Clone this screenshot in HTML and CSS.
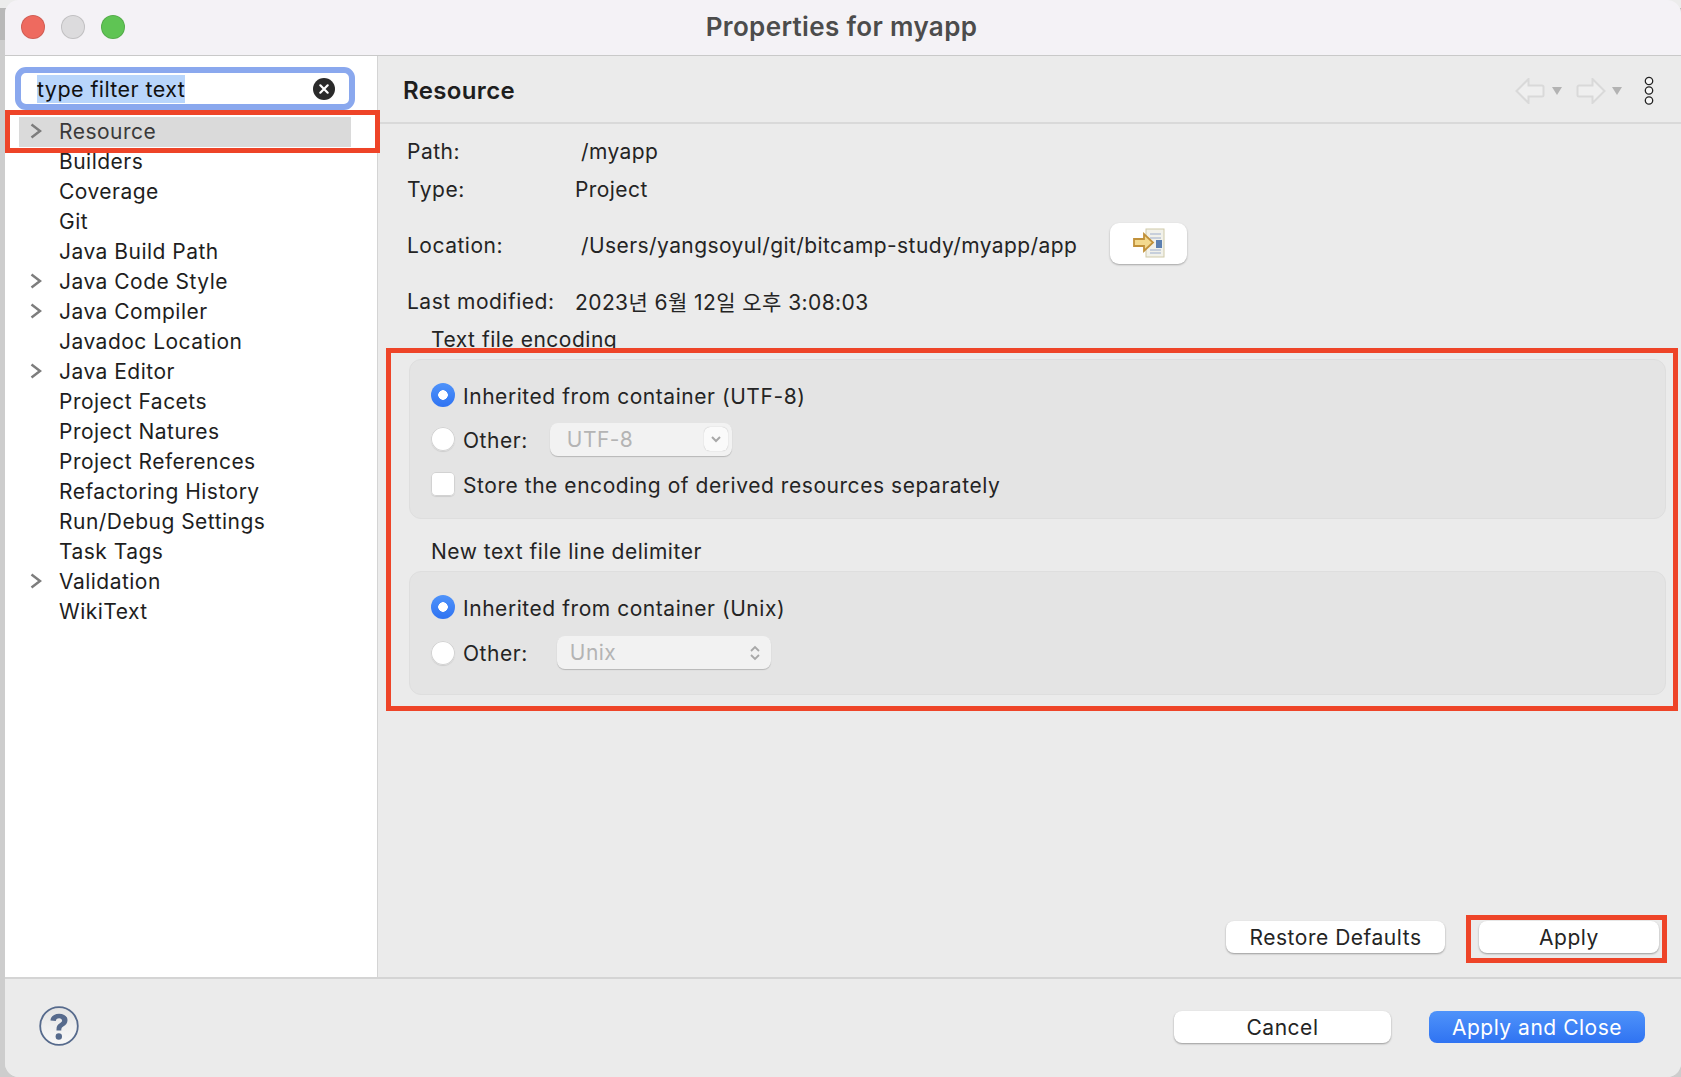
FILE: index.html
```html
<!DOCTYPE html>
<html lang="en">
<head>
<meta charset="utf-8">
<title>Properties for myapp</title>
<link rel="stylesheet" href="styles.css">
</head>
<body>
<div class="window">
  <header class="titlebar">
    <div class="lights"><span class="light red"></span><span class="light gray"></span><span class="light green"></span></div>
    <div class="title">Properties for myapp</div>
  </header>
  <div class="main">
    <aside class="sidebar">
      <div class="search"><span class="search-text">type filter text</span>
        <svg class="clear" width="22" height="22" viewBox="0 0 22 22"><circle cx="11" cy="11" r="11" fill="#2a2a2a"/><path d="M7.3 7.3l7.4 7.4M14.700 7.300l-7.400 7.400" stroke="#fff" stroke-width="2.200" stroke-linecap="round"/></svg>
      </div>
      <ul class="tree">
        <li class="node selected"><svg class="chev" width="12" height="16" viewBox="0 0 12 16"><path d="M1.500 1.500l8.500 6.500-8.500 6.500" fill="none" stroke="#7d7d7d" stroke-width="2.500"/></svg>Resource</li>
        <li class="node">Builders</li>
        <li class="node">Coverage</li>
        <li class="node">Git</li>
        <li class="node">Java Build Path</li>
        <li class="node"><svg class="chev" width="12" height="16" viewBox="0 0 12 16"><path d="M1.500 1.500l8.500 6.500-8.500 6.500" fill="none" stroke="#7d7d7d" stroke-width="2.500"/></svg>Java Code Style</li>
        <li class="node"><svg class="chev" width="12" height="16" viewBox="0 0 12 16"><path d="M1.500 1.500l8.500 6.500-8.500 6.500" fill="none" stroke="#7d7d7d" stroke-width="2.500"/></svg>Java Compiler</li>
        <li class="node">Javadoc Location</li>
        <li class="node"><svg class="chev" width="12" height="16" viewBox="0 0 12 16"><path d="M1.500 1.500l8.500 6.500-8.500 6.500" fill="none" stroke="#7d7d7d" stroke-width="2.500"/></svg>Java Editor</li>
        <li class="node">Project Facets</li>
        <li class="node">Project Natures</li>
        <li class="node">Project References</li>
        <li class="node">Refactoring History</li>
        <li class="node">Run/Debug Settings</li>
        <li class="node">Task Tags</li>
        <li class="node"><svg class="chev" width="12" height="16" viewBox="0 0 12 16"><path d="M1.500 1.500l8.500 6.500-8.500 6.500" fill="none" stroke="#7d7d7d" stroke-width="2.500"/></svg>Validation</li>
        <li class="node">WikiText</li>
      </ul>
    </aside>
    <section class="pane">
      <div class="pane-head">
        <h1 class="pane-title">Resource</h1>
        <div class="pane-tools">
          <svg width="30" height="26" viewBox="0 0 30 26"><path d="M13.500 1L1.500 13l12 12v-6.500h13.500a1.500 1.500 0 0 0 1.500-1.500V9a1.500 1.500 0 0 0-1.500-1.500H13.500z" fill="#efefef" stroke="#d9d9d9" stroke-width="2"/></svg>
          <svg class="drop" width="10" height="8" viewBox="0 0 10 8"><path d="M0 0h10L5 8z" fill="#b3b3b3"/></svg>
          <svg class="fwd" width="30" height="26" viewBox="0 0 30 26"><path d="M16.500 1l12 12-12 12v-6.500H3A1.500 1.500 0 0 1 1.500 17V9A1.500 1.500 0 0 1 3 7.500h13.500z" fill="#efefef" stroke="#d9d9d9" stroke-width="2"/></svg>
          <svg class="drop" width="10" height="8" viewBox="0 0 10 8"><path d="M0 0h10L5 8z" fill="#b3b3b3"/></svg>
          <svg class="more" width="10" height="29" viewBox="0 0 10 29"><circle cx="5" cy="5" r="3.700" fill="#f7f7f7" stroke="#222" stroke-width="1.300"/><circle cx="5" cy="14.500" r="3.700" fill="#f7f7f7" stroke="#222" stroke-width="1.300"/><circle cx="5" cy="24.500" r="3.700" fill="#f7f7f7" stroke="#222" stroke-width="1.300"/></svg>
        </div>
      </div>
      <div class="pane-body">
        <div class="info">
          <div class="info-row"><span class="info-label">Path:</span><span class="info-value shifted">/myapp</span></div>
          <div class="info-row"><span class="info-label">Type:</span><span class="info-value">Project</span></div>
          <div class="info-row tall"><span class="info-label">Location:</span><span class="info-value shifted">/Users/yangsoyul/git/bitcamp-study/myapp/app</span>
            <button class="icon-button" type="button"><svg width="32" height="30" viewBox="0 0 32 30"><rect x="13" y="1" width="18" height="28" fill="#f1f1ea" stroke="#cfc9a8"/><path d="M17 6h11M17 10h11M17 22h11M17 25h11" stroke="#b9c4d6" stroke-width="1.500"/><rect x="23" y="12" width="6" height="8" fill="#5b7fb0"/><path d="M1 11h10V6l9 8.500L11 23v-5H1z" fill="#f3d98e" stroke="#c1913a" stroke-width="1.800"/></svg></button>
          </div>
          <div class="info-row"><span class="info-label">Last modified:</span><span class="info-value">2023년 6월 12일 오후 3:08:03</span></div>
        </div>
        <div class="legend first">Text file encoding</div>
        <div class="group enc">
          <div class="opt"><span class="radio on"></span><span class="opt-label">Inherited from container (UTF-8)</span></div>
          <div class="opt"><span class="radio"></span><span class="opt-label">Other:</span><span class="combo utf">UTF-8<span class="combo-btn"><svg width="10" height="7" viewBox="0 0 10 7"><path d="M1 1l4 4 4-4" fill="none" stroke="#a8a8a8" stroke-width="2"/></svg></span></span></div>
          <div class="opt last"><span class="check"></span><span class="opt-label low">Store the encoding of derived resources separately</span></div>
        </div>
        <div class="legend second">New text file line delimiter</div>
        <div class="group delim">
          <div class="opt"><span class="radio on"></span><span class="opt-label">Inherited from container (Unix)</span></div>
          <div class="opt tallest"><span class="radio"></span><span class="opt-label">Other:</span><span class="combo unix">Unix<svg class="updown" width="10" height="16" viewBox="0 0 10 16"><path d="M1 6l4-4 4 4M1 10l4 4 4-4" fill="none" stroke="#a8a8a8" stroke-width="1.800"/></svg></span></div>
        </div>
        <div class="pane-actions">
          <button class="btn restore" type="button">Restore Defaults</button>
          <button class="btn apply" type="button">Apply</button>
        </div>
      </div>
    </section>
  </div>
  <footer class="footer">
    <svg class="help" width="40" height="40" viewBox="0 0 40 40"><defs><linearGradient id="hg" x1="0" y1="0" x2="0" y2="1"><stop offset="0" stop-color="#e4e4e4"/><stop offset="1" stop-color="#f8f8f8"/></linearGradient></defs><circle cx="20" cy="20" r="18.800" fill="url(#hg)" stroke="#566a8c" stroke-width="1.800"/><path d="M11.500 14.500c0-4 3.800-6.800 8.600-6.800 4.800 0 8.400 2.500 8.400 6.500 0 3.200-1.900 4.600-3.900 6-1.700 1.100-2.300 1.800-2.300 3.500v.8h-4.800v-1.300c0-2.800 1-4.200 3-5.600 1.500-1 2.600-1.700 2.600-3 0-1.500-1.200-2.400-3-2.400-2 0-3.200 1.100-3.300 2.800z" fill="#566a8c"/><circle cx="19.800" cy="30.500" r="3.200" fill="#566a8c"/></svg>
    <div class="footer-actions">
      <button class="btn cancel" type="button">Cancel</button>
      <button class="btn primary" type="button">Apply and Close</button>
    </div>
  </footer>
  <div class="mark mark-tree"></div>
  <div class="mark mark-groups"></div>
  <div class="mark mark-apply"></div>
</div>
</body>
</html>
```

FILE: styles.css
```css
* { box-sizing: border-box; }
html, body { margin: 0; height: 100%; }
body {
  background: linear-gradient(#ececec 0 8px, #b8b8b8 8px 40px, #cdcdcd 40px);
  font-family: Inter, "Noto Sans CJK KR", "Liberation Sans", sans-serif;
  font-size: 21px;
  letter-spacing: .42px;
  color: #242424;
  overflow: hidden;
}
.window {
  position: relative;
  margin-left: 5px;
  width: 1676px;
  height: 1077px;
  border-radius: 14px;
  overflow: hidden;
  display: flex;
  flex-direction: column;
  background: #ebebeb;
}
.titlebar {
  height: 56px;
  flex: none;
  position: relative;
  display: flex;
  align-items: center;
  justify-content: center;
  background: #f4f2f6;
  border-bottom: 1px solid #c9c9c9;
}
.lights {
  position: absolute;
  left: 16px;
  top: 15px;
  display: flex;
  gap: 16px;
}
.light {
  width: 24px;
  height: 24px;
  border-radius: 50%;
  border: 1px solid rgba(0,0,0,.12);
}
.light.red { background: #ee6a5f; }
.light.gray { background: #dcdbdd; }
.light.green { background: #5fc454; }
.title {
  font-size: 26px;
  font-weight: 600;
  letter-spacing: .35px;
  color: #4c4c4c;
  margin-top: -2px;
  margin-left: -3px;
}
.main { flex: 1; display: flex; min-height: 0; }
.sidebar {
  width: 373px;
  flex: none;
  background: #fff;
  border-right: 1px solid #d4d4d4;
  padding: 11px 10px 0;
}
.search {
  height: 43px;
  width: 340px;
  border: 6px solid #8aa8ee;
  border-radius: 11px;
  background: #fff;
  display: flex;
  align-items: center;
  justify-content: space-between;
  padding: 0 14px 0 16px;
  color: #111;
  font-size: 21.500px;
}
.search-text { background: #b8d5fb; line-height: 28px; }
.tree { list-style: none; margin: 7px 0 0; padding: 0; letter-spacing: .48px; }
.node {
  height: 30px;
  line-height: 29px;
  padding-left: 44px;
  position: relative;
  color: #1e1e1e;
  white-space: nowrap;
}
.node.selected {
  background: #dadada;
  color: #3a3a3a;
  width: 332px;
  margin-left: 4px;
  padding-left: 40px;
}
.chev { position: absolute; left: 15px; top: 6px; }
.node.selected .chev { left: 11px; }
.pane { flex: 1; display: flex; flex-direction: column; min-width: 0; }
.pane-head {
  height: 68px;
  flex: none;
  display: flex;
  align-items: center;
  justify-content: space-between;
  padding: 0 25px;
  border-bottom: 2px solid #d9d9d9;
}
.pane-title { margin: 2px 0 0; font-size: 24px; font-weight: 600; letter-spacing: .35px; color: #1e1e1e; }
.pane-tools { display: flex; align-items: center; gap: 7px; margin-top: 3px; }
.pane-tools .fwd { margin-left: 7px; margin-right: -1px; }
.pane-tools .more { margin: -1px 2px 0 15px; }
.pane-body {
  flex: 1;
  display: flex;
  flex-direction: column;
  padding: 8px 14px 24px 29px;
  min-height: 0;
}
.info-row { height: 38px; display: flex; align-items: center; }
.info-row.tall { height: 74px; }
.info-label { width: 168px; flex: none; letter-spacing: .5px; }
.info-value { white-space: nowrap; }
.info-value.shifted { padding-left: 6px; }
.icon-button {
  width: 77px;
  height: 41px;
  margin: 0 0 4px 33px;
  border: 0;
  border-radius: 9px;
  background: #fff;
  box-shadow: 0 1px 2px rgba(0,0,0,.3);
  display: flex;
  align-items: center;
  justify-content: center;
  padding: 0;
}
.legend { padding-left: 24px; letter-spacing: .52px; }
.legend.first { height: 39px; line-height: 39px; }
.legend.second { height: 52px; padding-top: 12px; line-height: 42px; }
.group {
  margin-left: 2px;
  margin-right: 1px;
  border: 1px solid #dedede;
  border-radius: 12px;
  background: #e4e4e4;
  padding: 13px 20px 0 21px;
}
.group.enc { height: 160px; }
.group.delim { height: 124px; }
.opt {
  height: 44px;
  display: flex;
  align-items: center;
  white-space: nowrap;
}
.opt.last { height: 45px; }
.opt.tallest { height: 47px; }
.opt-label { margin-top: 2px; letter-spacing: .55px; }
.opt-label.low { margin-top: 4px; }
.radio {
  width: 24px;
  height: 24px;
  margin-right: 8px;
  border-radius: 50%;
  background: #fff;
  box-shadow: 0 0 0 1px #d2d2d2 inset, 0 1px 1px rgba(0,0,0,.1);
  flex: none;
}
.radio.on {
  background: radial-gradient(circle, #fff 0 4.500px, transparent 5px), linear-gradient(#4f93fa, #2f73f2);
  box-shadow: none;
}
.check {
  width: 24px;
  height: 24px;
  margin-right: 8px;
  border-radius: 5px;
  background: #fff;
  box-shadow: 0 0 0 1px #d2d2d2 inset, 0 1px 1px rgba(0,0,0,.1);
  flex: none;
}
.combo {
  height: 33px;
  border-radius: 8px;
  background: #f2f2f2;
  box-shadow: 0 1px 1px rgba(0,0,0,.2);
  color: #b4b4b4;
  display: flex;
  align-items: center;
  justify-content: space-between;
}
.combo.utf { width: 182px; margin-left: 22px; padding: 0 4px 0 17px; }
.combo.unix { width: 214px; margin-left: 29px; padding: 0 11px 0 13px; }
.combo-btn {
  width: 24px;
  height: 24px;
  border-radius: 6px;
  background: #fafafa;
  box-shadow: 0 0 1px rgba(0,0,0,.3);
  display: flex;
  align-items: center;
  justify-content: center;
}
.pane-actions {
  margin-top: auto;
  display: flex;
  justify-content: flex-end;
  gap: 34px;
  padding-right: 8px;
}
.btn {
  height: 32px;
  border: 0;
  border-radius: 8px;
  background: #fff;
  box-shadow: 0 1px 2px rgba(0,0,0,.35);
  font: inherit;
  letter-spacing: .52px;
  color: #242424;
  padding: 0;
}
.btn.restore { width: 219px; }
.btn.apply { width: 180px; }
.btn.cancel { width: 217px; }
.btn.primary {
  width: 216px;
  color: #fff;
  background: linear-gradient(#4f93fa, #2f73f2);
  box-shadow: none;
}
.footer {
  height: 100px;
  flex: none;
  border-top: 2px solid #d4d4d4;
  background: #ebebeb;
  display: flex;
  justify-content: space-between;
  padding: 32px 36px 0 34px;
}
.help { margin-top: -5px; }
.footer-actions { display: flex; gap: 38px; }
.mark { position: absolute; border: 5px solid #ee4428; pointer-events: none; }
.mark-tree { left: 0; top: 110px; width: 375px; height: 43px; }
.mark-groups { left: 381px; top: 348px; width: 1292px; height: 363px; }
.mark-apply { left: 1461px; top: 915px; width: 201px; height: 48px; }
```
